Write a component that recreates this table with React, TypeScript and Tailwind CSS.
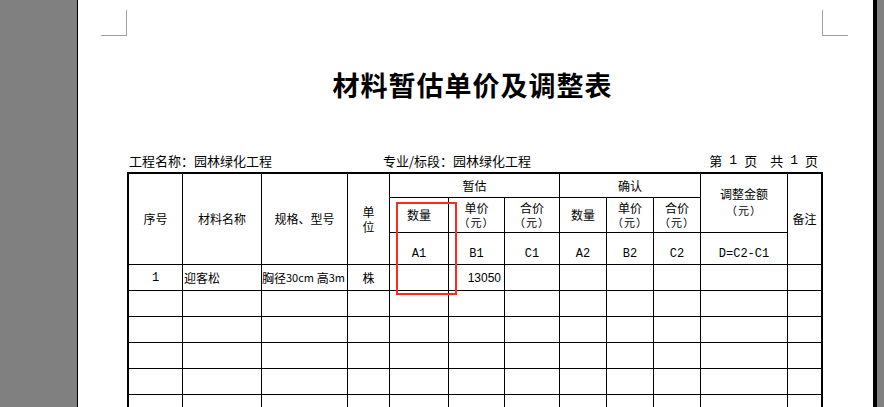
import React from "react";

const cjk = { fontFamily: '"Noto Sans CJK SC", "Noto Sans", sans-serif' };
const mono = { fontFamily: '"Liberation Mono", "DejaVu Sans Mono", monospace' };
const sans = { fontFamily: '"Liberation Sans", Arial, sans-serif' };

function Cell({
  className = "",
  children,
  style,
}: {
  className?: string;
  children?: React.ReactNode;
  style?: React.CSSProperties;
}) {
  return (
    <div className={`bg-white flex items-center justify-center text-center text-[12px] text-black ${className}`} style={style}>
      {children}
    </div>
  );
}

function TwoLine({ top }: { top: string }) {
  return (
    <div className="flex flex-col items-center leading-[14px] pb-[1px]">
      <span>{top}</span>
      <span className="text-[11px] tracking-[1px]">（元）</span>
    </div>
  );
}

export default function App() {
  const emptyRows = 5;
  return (
    <div className="w-[884px] h-[407px] overflow-hidden flex bg-[#808080]" style={cjk}>
      <div className="w-[77px] shrink-0" />
      <div className="w-px shrink-0 bg-black" />
      <div className="w-[795px] shrink-0 bg-white flex flex-col">
        {/* corner marks */}
        <div className="h-[36px] shrink-0 flex justify-between pl-[23px] pr-[25px] pt-[10px]">
          <div className="w-[26px] h-[26px] border-r border-b border-[#a0a0a0]" />
          <div className="w-[26px] h-[26px] border-l border-b border-[#a0a0a0]" />
        </div>
        {/* title */}
        <div className="mt-[31px] h-[36px] leading-[36px] text-center text-[27px] font-bold tracking-[1px] pr-[6px] text-black">
          材料暂估单价及调整表
        </div>
        {/* info */}
        <div className="mt-[49px] ml-[49px] w-[696px] h-[17px] leading-[17px] flex text-[13px] text-black pl-[2px] pr-[5px]">
          <div className="w-[254px]">工程名称：园林绿化工程</div>
          <div className="flex-1">专业/标段：园林绿化工程</div>
          <div className="flex gap-[7px]">
            <span>第</span>
            <span style={mono}>1</span>
            <span>页</span>
            <span className="ml-[6px]">共</span>
            <span style={mono}>1</span>
            <span>页</span>
          </div>
        </div>
        {/* table */}
        <div className="relative mt-[3px] ml-[49px] w-[696px]">
          <div className="grid gap-px bg-black border-2 border-black grid-cols-[53px_78px_85px_41px_58px_55px_54px_46px_46px_46px_86px_33px] grid-rows-[23px_34px_31px_25px_25px_25px_25px_25px_25px]">
            <Cell className="row-span-3">序号</Cell>
            <Cell className="row-span-3">材料名称</Cell>
            <Cell className="row-span-3">规格、型号</Cell>
            <Cell className="row-span-3 leading-[15px]">
              单<br />位
            </Cell>
            <Cell className="col-span-3">暂估</Cell>
            <Cell className="col-span-3">确认</Cell>
            <Cell className="row-span-2 pb-[2px]">
              <div className="flex flex-col items-center leading-[16px]">
                <span>调整金额</span>
                <span className="text-[11px] tracking-[1px]">（元）</span>
              </div>
            </Cell>
            <Cell className="row-span-3">备注</Cell>

            <Cell>数量</Cell>
            <Cell><TwoLine top="单价" /></Cell>
            <Cell><TwoLine top="合价" /></Cell>
            <Cell>数量</Cell>
            <Cell><TwoLine top="单价" /></Cell>
            <Cell><TwoLine top="合价" /></Cell>

            {["A1", "B1", "C1", "A2", "B2", "C2", "D=C2-C1"].map((t) => (
              <Cell key={t} className="pt-[10px] text-[11px]" style={mono}>
                {t}
              </Cell>
            ))}

            <Cell style={mono} className="text-[11px]">1</Cell>
            <Cell className="justify-start pl-[1px]">迎客松</Cell>
            <Cell className="justify-start whitespace-nowrap">
              胸径<span className="text-[11px]">30cm</span>&nbsp;高<span className="text-[11px]">3m</span>
            </Cell>
            <Cell>株</Cell>
            <Cell />
            <Cell className="justify-end pr-[3px] text-[11px]" style={sans}>13050</Cell>
            <Cell />
            <Cell />
            <Cell />
            <Cell />
            <Cell />
            <Cell />

            {Array.from({ length: emptyRows * 12 }).map((_, i) => (
              <Cell key={i} />
            ))}
          </div>
          <div className="absolute left-[269px] top-[30px] w-[61px] h-[93px] border-2 border-[#ff2a1f]" />
        </div>
      </div>
      <div className="w-[4px] shrink-0 bg-black" />
      <div className="flex-1" />
    </div>
  );
}
